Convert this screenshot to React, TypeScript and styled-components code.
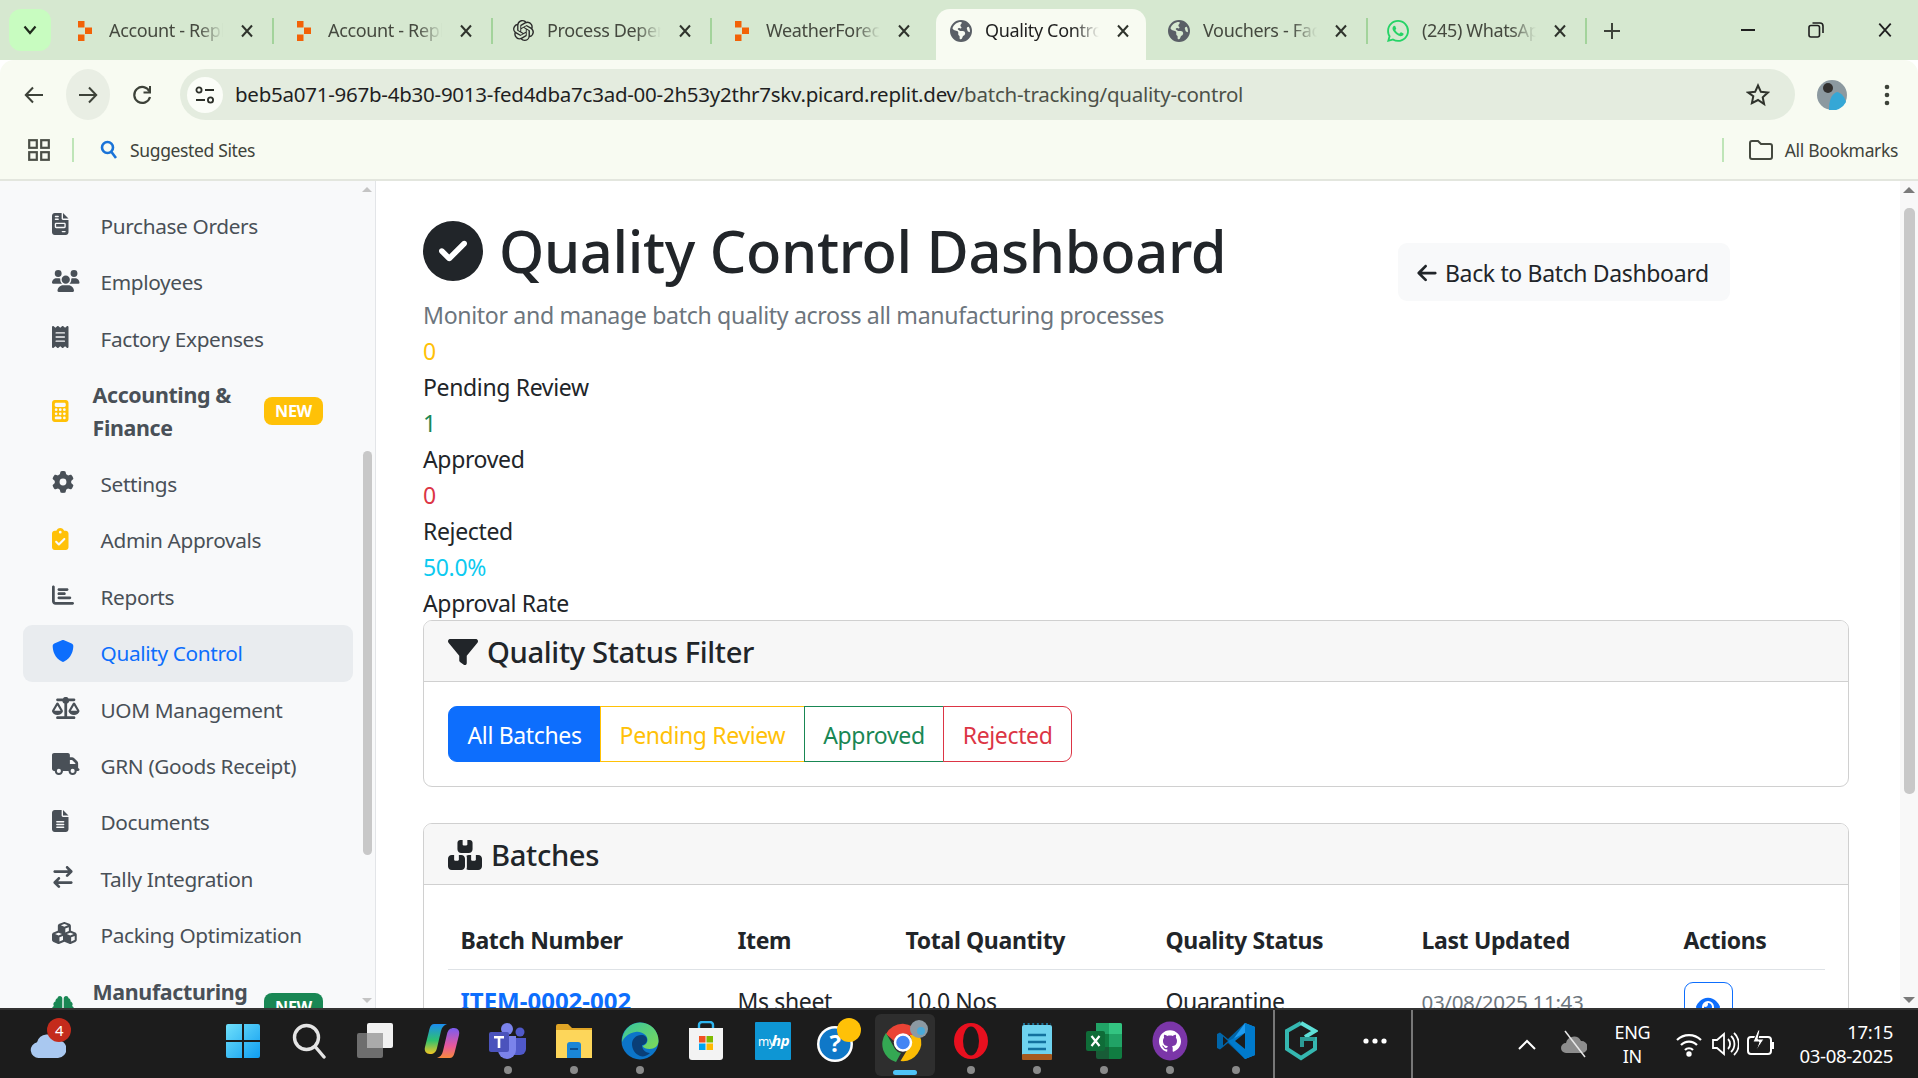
import React from 'react';
import styled, { createGlobalStyle } from 'styled-components';
import {
  FaArrowLeft, FaArrowRightArrowLeft, FaBoxesStacked, FaBrain, FaCalculator, FaChartBar, FaCircleCheck, FaClipboardCheck,
  FaCubes, FaEarthAmericas, FaEye, FaFileInvoice, FaFileLines, FaFilter, FaGear, FaReceipt, FaScaleBalanced, FaShield,
  FaTruck, FaUsers,
} from 'react-icons/fa6';
import { SiGithub, SiOpenai, SiWhatsapp } from 'react-icons/si';

const FONT = '"Noto Sans", "Open Sans", Arial, sans-serif';

const GlobalStyle = createGlobalStyle`
  html, body {
    margin: 0;
    padding: 0;
    height: 100%;
    overflow: hidden;
    background: #fff;
  }
  body {
    font-family: ${FONT};
    color: #212529;
    letter-spacing: -0.022em;
  }
  * { box-sizing: border-box; }
`;

const Screen = styled.div`
  width: 1918px;
  height: 1078px;
  display: flex;
  flex-direction: column;
  overflow: hidden;
`;

/* browser chrome */
const TabStrip = styled.div`
  height: 60px;
  flex: none;
  background: #d6e8d0;
  display: flex;
  align-items: flex-end;
  padding-left: 9px;
`;

const TabMenu = styled.div`
  width: 42px;
  height: 42px;
  margin-bottom: 9px;
  margin-right: 4px;
  border-radius: 12px;
  background: #c8fcc0;
  display: flex;
  align-items: center;
  justify-content: center;
`;

const Tab = styled.div<{ $active?: boolean; $sep?: boolean; $w: number; $pad: number }>`
  width: ${({ $w }) => $w}px;
  height: 51px;
  flex: none;
  display: flex;
  align-items: center;
  padding: 0 0 8px ${({ $pad }) => $pad}px;
  border-radius: 14px 14px 0 0;
  background: ${({ $active }) => ($active ? '#f8fbf2' : 'transparent')};
  position: relative;
  color: ${({ $active }) => ($active ? '#1f1f1f' : '#45493f')};

  &::after {
    content: '';
    display: ${({ $sep }) => ($sep ? 'block' : 'none')};
    position: absolute;
    right: 0;
    top: 9px;
    height: 26px;
    width: 2px;
    background: #a3d39b;
  }
`;

const Favicon = styled.div`
  width: 22px;
  height: 22px;
  flex: none;
  display: flex;
  align-items: center;
  justify-content: center;
`;

const TabTitle = styled.div`
  width: 114px;
  margin: -2px 0 0 13px;
  flex: none;
  font-size: 18px;
  white-space: nowrap;
  overflow: hidden;
  mask-image: linear-gradient(to right, #000 78%, transparent 100%);
`;

const TabClose = styled.div`
  margin-left: 17px;
  width: 14px;
  height: 14px;
  flex: none;
  display: flex;
`;

const NewTab = styled.div`
  width: 24px;
  height: 42px;
  margin-left: 13px;
  margin-bottom: 8px;
  display: flex;
  align-items: center;
  justify-content: center;
`;

const WindowControls = styled.div`
  margin-left: auto;
  height: 60px;
  display: flex;
  align-self: flex-start;
  align-items: center;
  gap: 53px;
  padding: 0 25px 0 0;
`;

const Toolbar = styled.div`
  height: 60px;
  flex: none;
  background: #f8fbf2;
  display: flex;
  align-items: center;
  padding: 9px 0 0 12px;
  border-radius: 14px 14px 0 0;
`;

const NavButton = styled.div<{ $on?: boolean }>`
  width: 44px;
  height: 51px;
  margin-right: 10px;
  border-radius: 50%;
  background: ${({ $on }) => ($on ? '#e9eee4' : 'transparent')};
  display: flex;
  align-items: center;
  justify-content: center;
  flex: none;
`;

const Omnibox = styled.div`
  width: 1615px;
  height: 51px;
  margin-left: 6px;
  border-radius: 26px;
  background: #e4ecdf;
  display: flex;
  align-items: center;
  flex: none;
  padding: 0 25px 0 7px;
`;

const TuneCircle = styled.div`
  width: 36px;
  height: 36px;
  border-radius: 50%;
  background: #fbfdf8;
  display: flex;
  align-items: center;
  justify-content: center;
  flex: none;
`;

const Url = styled.div`
  margin: -2px 0 0 12px;
  font-size: 20.5px;
  color: #1f1f1f;
  white-space: nowrap;
  letter-spacing: -0.012em;

  span {
    color: #4c5148;
  }
`;

const ToolEnd = styled.div`
  display: flex;
  align-items: center;
  flex: none;
  margin-left: 22px;
  gap: 37px;
`;

const BookmarkBar = styled.div`
  height: 61px;
  flex: none;
  background: #f8fbf2;
  border-bottom: 2px solid #e3e6de;
  display: flex;
  align-items: center;
  padding: 0 20px 0 28px;
  font-size: 17.5px;
  color: #3f433b;
`;

const VSep = styled.div<{ $m: string }>`
  width: 2px;
  height: 24px;
  background: #bfe5b8;
  margin: ${({ $m }) => $m};
  flex: none;
`;

const BarLabel = styled.span<{ $m: number }>`
  margin-left: ${({ $m }) => $m}px;
`;

const Push = styled.div`
  margin-left: auto;
`;

/* page */
const Page = styled.div`
  flex: 1;
  min-height: 0;
  display: flex;
  overflow: hidden;
  background: #fff;
`;

const Sidebar = styled.aside`
  width: 376px;
  flex: none;
  display: flex;
  background: #f8f9fa;
  border-right: 1px solid #e3e5e8;
  overflow: hidden;
`;

const SideList = styled.nav`
  width: 360px;
  flex: none;
  padding: 17px 7px 0 23px;
  font-size: 20.8px;
`;

const SideItem = styled.div<{ $active?: boolean; $group?: boolean }>`
  display: flex;
  align-items: center;
  min-height: 56.4px;
  padding: 12px 30px 12px 29px;
  border-radius: 9px;
  line-height: 32.4px;
  color: ${({ $active }) => ($active ? '#0d6efd' : '#495057')};
  background: ${({ $active }) => ($active ? '#e9ecef' : 'transparent')};
  font-weight: ${({ $group }) => ($group ? 700 : 400)};
  font-size: ${({ $group }) => ($group ? '21.4px' : '20.8px')};
`;

const SideIcon = styled.div<{ $group?: boolean; $color?: string; $iw: number }>`
  width: ${({ $group }) => ($group ? '40.5px' : '48.5px')};
  flex: none;
  display: flex;
  margin-top: ${({ $group }) => ($group ? '-2px' : '-4px')};
  color: ${({ $color }) => $color || 'inherit'};

  svg {
    height: 22px;
    width: ${({ $iw }) => $iw}px;
  }
`;

const SideLabel = styled.div<{ $group?: boolean }>`
  min-height: ${({ $group }) => ($group ? '64.8px' : '0')};
  width: ${({ $group }) => ($group ? '171px' : 'auto')};
  flex: none;
`;

const NewBadge = styled.div<{ $bg: string; $fg: string }>`
  margin: -2px 0 0 auto;
  width: 59px;
  height: 28px;
  border-radius: 8px;
  background: ${({ $bg }) => $bg};
  color: ${({ $fg }) => $fg};
  font-size: 16.2px;
  line-height: 28px;
  text-align: center;
  font-weight: 700;
  flex: none;
`;

const ScrollBar = styled.div<{ $w: number; $bg: string }>`
  width: ${({ $w }) => $w}px;
  flex: none;
  background: ${({ $bg }) => $bg};
  display: flex;
  flex-direction: column;
  align-items: center;
  height: 100%;
`;

const ScrollArrow = styled.div<{ $down?: boolean; $color: string; $size: number }>`
  width: 0;
  height: 0;
  flex: none;
  border-left: ${({ $size }) => $size}px solid transparent;
  border-right: ${({ $size }) => $size}px solid transparent;
  ${({ $down, $color, $size }) =>
    $down
      ? `border-top: ${$size}px solid ${$color};`
      : `border-bottom: ${$size}px solid ${$color};`}
  margin-top: ${({ $down }) => ($down ? 'auto' : '6px')};
  margin-bottom: ${({ $down }) => ($down ? '5px' : '0')};
`;

const ScrollThumb = styled.div<{ $top: number; $h: number; $w: number }>`
  width: ${({ $w }) => $w}px;
  height: ${({ $h }) => $h}px;
  margin-top: ${({ $top }) => $top}px;
  border-radius: 5px;
  background: #c8c8c8;
  flex: none;
`;

const MainWrap = styled.main`
  flex: 1;
  min-width: 0;
  display: flex;
`;

const Content = styled.div`
  flex: 1;
  min-width: 0;
  padding: 34px 51px 0 47px;
  font-size: 23px;
  line-height: 36px;
`;

const HeaderRow = styled.div`
  display: flex;
  justify-content: space-between;
  padding-right: 119px;
`;

const Title = styled.h1`
  margin: 0 0 10px;
  font-size: 57.8px;
  line-height: 72px;
  font-weight: 500;
  display: flex;
  align-items: center;
  gap: 16px;
  color: #212529;
`;

const Lead = styled.div`
  color: #6c757d;
  font-size: 23.15px;
`;

const BackButton = styled.div`
  margin-top: 28px;
  height: 58px;
  width: 332px;
  border-radius: 9px;
  background: #f8f9fa;
  display: flex;
  align-items: center;
  gap: 7px;
  padding: 2px 0 0 18px;
  color: #212529;
`;

const Stats = styled.div`
  margin-bottom: -1px;
`;

const StatValue = styled.div<{ $color: string }>`
  color: ${({ $color }) => $color};
`;

const Card = styled.section`
  border: 1px solid #d0d0d0;
  border-radius: 9px;
  margin-bottom: 36px;
  overflow: hidden;
  background: #fff;
`;

const CardHeader = styled.div`
  height: 61px;
  padding: 2px 24px 0;
  background: #f7f7f7;
  border-bottom: 1px solid #d0d0d0;
  display: flex;
  align-items: center;
  gap: 9px;
  font-size: 29.2px;
  font-weight: 500;
`;

const CardBody = styled.div`
  padding: 24px;
`;

const FilterGroup = styled.div`
  display: inline-flex;
`;

const FilterButton = styled.div<{ $color: string; $solid?: boolean }>`
  height: 56px;
  padding: 2px 18.5px 0;
  display: flex;
  align-items: center;
  border: 1.5px solid ${({ $color }) => $color};
  margin-left: -1px;
  background: ${({ $solid, $color }) => ($solid ? $color : '#fff')};
  color: ${({ $solid, $color }) => ($solid ? '#fff' : $color)};

  &:first-child {
    margin-left: 0;
    border-radius: 9px 0 0 9px;
  }
  &:last-child {
    border-radius: 0 9px 9px 0;
  }
`;

const Table = styled.table`
  width: 100%;
  border-collapse: collapse;
  table-layout: fixed;

  th {
    height: 60px;
    padding: 13px 12.5px 11px;
    font-weight: 700;
    text-align: left;
    border-bottom: 1.5px solid #dee2e6;
  }
  td {
    padding: 13px 12.5px 12px;
    vertical-align: top;
  }
`;

const BatchLink = styled.a`
  color: #0d6efd;
  font-weight: 700;
  font-size: 24px;
  letter-spacing: 0;
`;

const DateText = styled.small`
  font-size: 20.6px;
  color: #6c757d;
`;

const ViewButton = styled.div`
  width: 49px;
  height: 50px;
  margin-top: -1px;
  border: 1.5px solid #0d6efd;
  border-radius: 9px;
  color: #0d6efd;
  display: flex;
  align-items: center;
  justify-content: center;
  font-size: 24px;
`;

/* taskbar */
const Taskbar = styled.footer`
  height: 70px;
  flex: none;
  background: #1c1c1c;
  border-top: 2px solid #333;
  display: flex;
  align-items: center;
  color: #fff;
  font-family: ${FONT};
`;

const Weather = styled.div`
  width: 210px;
  flex: none;
  height: 100%;
  position: relative;
  padding: 22px 0 0 30px;
`;

const WeatherBadge = styled.div`
  position: absolute;
  left: 47px;
  top: 8px;
  width: 24px;
  height: 24px;
  border-radius: 50%;
  background: #c42b1c;
  font-size: 15px;
  line-height: 24px;
  text-align: center;
`;

const TaskSlot = styled.div<{ $active?: boolean; $ml?: number }>`
  width: 66.2px;
  height: 100%;
  flex: none;
  position: relative;
  margin-left: ${({ $ml }) => $ml || 0}px;
  display: flex;
  align-items: center;
  justify-content: center;
  padding-bottom: 6px;

  ${({ $active }) => ($active ? `
    &::before {
      content: '';
      position: absolute;
      left: 3px;
      right: 3px;
      top: 4px;
      bottom: 2px;
      background: #2e2e2e;
      border-radius: 6px;
    }
  ` : '')}

  & > svg {
    position: relative;
  }
`;

const RunDot = styled.div<{ $active?: boolean }>`
  position: absolute;
  left: 50%;
  bottom: ${({ $active }) => ($active ? '3px' : '4px')};
  width: ${({ $active }) => ($active ? '24px' : '8px')};
  height: ${({ $active }) => ($active ? '5px' : '8px')};
  margin-left: ${({ $active }) => ($active ? '-12px' : '-4px')};
  border-radius: 4px;
  background: ${({ $active }) => ($active ? '#4fc3f7' : '#8a8a8a')};
`;

const TaskDivider = styled.div<{ $ml: number }>`
  width: 2px;
  height: 100%;
  background: #777;
  flex: none;
  margin-left: ${({ $ml }) => $ml}px;
`;

const Tray = styled.div`
  flex: 1;
  display: flex;
  align-items: center;
  height: 100%;
`;

const TrayIcon = styled.div<{ $w: number; $ml: number }>`
  width: ${({ $w }) => $w}px;
  margin-left: ${({ $ml }) => $ml}px;
  flex: none;
  display: flex;
  justify-content: center;
`;

const LangBlock = styled.div`
  width: 60px;
  margin-left: 15px;
  font-size: 18px;
  line-height: 24px;
  text-align: center;
  flex: none;
`;

const ClockBlock = styled.div`
  margin-left: auto;
  padding-right: 25px;
  font-size: 18.6px;
  line-height: 24px;
  text-align: right;
`;

const ReplitIcon = () => (
  <svg width="16" height="22" viewBox="0 0 16 22" fill="#f26207">
    <path d="M1 1h6.5v6.5H1zM8 7.5h7V14H8zM1 14.5h6.5V21H1z" />
  </svg>
);

const Globe = ({ size = 22 }: { size?: number }) => <FaEarthAmericas size={size} color="#5a5f66" />;

const XMark = ({ size = 14, color = '#2f332c', weight = 2 }: { size?: number; color?: string; weight?: number }) => (
  <svg width={size} height={size} viewBox="0 0 14 14" stroke={color} strokeWidth={weight} fill="none">
    <path d="M2 1.5 12 12.5M12 1.5 2 12.5" />
  </svg>
);

const tabs = [
  { title: 'Account - Replit', icon: <ReplitIcon />, sep: true, w: 219, pad: 19 },
  { title: 'Account - Replit', icon: <ReplitIcon />, sep: true, w: 219, pad: 19 },
  { title: 'Process Dependencies', icon: <SiOpenai size={21} color="#2b2b2b" />, sep: true, w: 219, pad: 19 },
  { title: 'WeatherForecast', icon: <ReplitIcon />, sep: false, w: 224, pad: 19 },
  { title: 'Quality Control', icon: <Globe />, active: true, w: 210, pad: 14 },
  { title: 'Vouchers - Factory', icon: <Globe />, sep: true, w: 222, pad: 22 },
  { title: '(245) WhatsApp', icon: <SiWhatsapp size={22} color="#25d366" />, sep: true, w: 219, pad: 19 },
];

// iw: drawn width of the glyph at 22px height, from its font-awesome viewBox
const sideItems = [
  { label: 'Purchase Orders', icon: <FaFileInvoice />, iw: 16.5 },
  { label: 'Employees', icon: <FaUsers />, iw: 27.5 },
  { label: 'Factory Expenses', icon: <FaReceipt />, iw: 16.5 },
  { label: 'Accounting & Finance', icon: <FaCalculator />, iw: 16.5, group: true, color: '#ffc107', badge: ['#ffc107', '#fff'] },
  { label: 'Settings', icon: <FaGear />, iw: 22 },
  { label: 'Admin Approvals', icon: <FaClipboardCheck />, iw: 16.5, color: '#ffc107' },
  { label: 'Reports', icon: <FaChartBar />, iw: 22 },
  { label: 'Quality Control', icon: <FaShield />, iw: 22, active: true },
  { label: 'UOM Management', icon: <FaScaleBalanced />, iw: 27.5 },
  { label: 'GRN (Goods Receipt)', icon: <FaTruck />, iw: 27.5 },
  { label: 'Documents', icon: <FaFileLines />, iw: 16.5 },
  { label: 'Tally Integration', icon: <FaArrowRightArrowLeft />, iw: 22 },
  { label: 'Packing Optimization', icon: <FaCubes />, iw: 24.75 },
  { label: 'Manufacturing', icon: <FaBrain />, iw: 22, group: true, color: '#198754', badge: ['#198754', '#fff'] },
];

const stats = [
  { value: '0', label: 'Pending Review', color: '#ffc107' },
  { value: '1', label: 'Approved', color: '#198754' },
  { value: '0', label: 'Rejected', color: '#dc3545' },
  { value: '50.0%', label: 'Approval Rate', color: '#0dcaf0' },
];

const WinLogo = () => (
  <svg width="36" height="36" viewBox="0 0 36 36">
    <defs>
      <linearGradient id="win" x1="0" y1="0" x2="1" y2="1">
        <stop offset="0" stopColor="#6fe0fb" />
        <stop offset="1" stopColor="#0f9df0" />
      </linearGradient>
    </defs>
    <path fill="url(#win)" d="M1 3a2 2 0 0 1 2-2h14v16H1zM19 1h14a2 2 0 0 1 2 2v14H19zM1 19h16v16H3a2 2 0 0 1-2-2zM19 19h16v14a2 2 0 0 1-2 2H19z" />
  </svg>
);

const SearchGlyph = () => (
  <svg width="34" height="36" viewBox="0 0 34 36" fill="none" stroke="#e4e4e4" strokeWidth="3.4" strokeLinecap="round">
    <circle cx="14.5" cy="14.5" r="12" />
    <path d="M23.5 24 32 34" />
  </svg>
);

const TaskViewGlyph = () => (
  <svg width="36" height="36" viewBox="0 0 36 36">
    <rect x="10" y="0" width="26" height="25" rx="2" fill="#f1f1f1" />
    <rect x="0" y="10" width="26" height="25" rx="2" fill="#6e6e6e" />
    <rect x="10" y="10" width="16" height="15" fill="#aaa" />
  </svg>
);

const CopilotGlyph = () => (
  <svg width="36" height="36" viewBox="0 0 36 36">
    <defs>
      <linearGradient id="cop1" x1="0" y1="0" x2="0" y2="1">
        <stop offset="0" stopColor="#1b8cf0" />
        <stop offset="0.55" stopColor="#2fc26f" />
        <stop offset="1" stopColor="#f3c623" />
      </linearGradient>
      <linearGradient id="cop2" x1="0" y1="0" x2="0" y2="1">
        <stop offset="0" stopColor="#7b5cf0" />
        <stop offset="0.6" stopColor="#e8589c" />
        <stop offset="1" stopColor="#f78a3c" />
      </linearGradient>
    </defs>
    <path fill="url(#cop1)" d="M10 1h13c-3 1-5 3-6 7l-4 17c-1 4-3 6-7 6-4 0-6-3-5-7L5 8c1-4 2-7 5-7z" />
    <path fill="url(#cop2)" d="M26 35H13c3-1 5-3 6-7l4-17c1-4 3-6 7-6 4 0 6 3 5 7l-4 16c-1 4-2 7-5 7z" />
  </svg>
);

const TeamsGlyph = () => (
  <svg width="38" height="36" viewBox="0 0 38 36">
    <circle cx="18" cy="6" r="6" fill="#7b83eb" />
    <circle cx="31" cy="9" r="4.5" fill="#5059c9" />
    <path fill="#5059c9" d="M24 15h13v11a6 6 0 0 1-6 6h-7z" />
    <path fill="#7b83eb" d="M9 13h18v14a9 9 0 0 1-18 0z" />
    <rect x="0" y="9" width="20" height="20" rx="2" fill="#4b53bc" />
    <path fill="#fff" d="M5 13h10v2.5h-3.7V25H8.7v-9.5H5z" />
  </svg>
);

const FolderGlyph = () => (
  <svg width="38" height="36" viewBox="0 0 38 36">
    <path fill="#e0a526" d="M1 3a2 2 0 0 1 2-2h10l4 4h20v6H1z" />
    <path fill="#fdd65a" d="M1 7h36v28H1z" />
    <path fill="#1a86d6" d="M12 22a3 3 0 0 1 3-3h8a3 3 0 0 1 3 3v13H12z" />
    <rect x="15" y="25" width="8" height="2" fill="#0b4f8f" />
  </svg>
);

const EdgeGlyph = () => (
  <svg width="38" height="38" viewBox="0 0 38 38">
    <defs>
      <linearGradient id="edge1" x1="0" y1="0" x2="1" y2="1">
        <stop offset="0" stopColor="#36c5a0" />
        <stop offset="1" stopColor="#7ed957" />
      </linearGradient>
    </defs>
    <circle cx="19" cy="19" r="18.5" fill="#0c75c9" />
    <path fill="url(#edge1)" d="M19 .5C30 .5 37.5 9 37.5 19c0 5-4 8-9 8-3.5 0-6-1-7-3 3-1 5-3 5-6 0-5-6-9-12-8C8 11 3 15 1 20 1 9 9 .5 19 .5z" />
    <path fill="#0a3f78" d="M11 22c0-5 4-9 9-9 4 0 6 2 6 5s-3 5-5 5c0 4 3 8 8 8-3 3-7 4-10 3-5-2-8-7-8-12z" />
  </svg>
);

const StoreGlyph = () => (
  <svg width="36" height="40" viewBox="0 0 36 40">
    <path d="M11 8V4a3 3 0 0 1 3-3h8a3 3 0 0 1 3 3v4" fill="none" stroke="#2fb6f0" strokeWidth="2.4" />
    <path fill="#f3f3f3" d="M1 7h34v29a3 3 0 0 1-3 3H4a3 3 0 0 1-3-3z" />
    <rect x="11" y="15" width="6.5" height="6.5" fill="#f25022" />
    <rect x="18.5" y="15" width="6.5" height="6.5" fill="#7fba00" />
    <rect x="11" y="22.5" width="6.5" height="6.5" fill="#00a4ef" />
    <rect x="18.5" y="22.5" width="6.5" height="6.5" fill="#ffb900" />
  </svg>
);

const MyHpGlyph = () => (
  <svg width="36" height="38" viewBox="0 0 36 38">
    <rect width="36" height="38" rx="1" fill="#0e96d4" />
    <text x="3" y="24" fontSize="12" fill="#fff" fontFamily="Noto Sans, sans-serif">my</text>
    <text x="17" y="24" fontSize="15" fontStyle="italic" fontWeight="700" fill="#fff" fontFamily="Noto Sans, sans-serif">hp</text>
  </svg>
);

const HelpGlyph = () => (
  <svg width="46" height="46" viewBox="0 0 46 46">
    <circle cx="19" cy="26" r="18" fill="#fff" />
    <circle cx="19" cy="26" r="15.5" fill="#0f78c8" />
    <text x="19" y="34" fontSize="24" fontWeight="700" textAnchor="middle" fill="#fff" fontFamily="Noto Sans, sans-serif">?</text>
    <ellipse cx="33" cy="12" rx="12" ry="12" fill="#ffc107" />
  </svg>
);

const ChromeGlyph = () => (
  <svg width="46" height="46" viewBox="0 0 46 46">
    <path fill="#ea4335" d="M4 16a18.5 18.5 0 0 1 33.5 1H21a9 9 0 0 0-9 6z" />
    <path fill="#34a853" d="M4 16l9 16a9 9 0 0 0 6 4l-5 9A18.5 18.5 0 0 1 4 16z" transform="translate(0 -1)" />
    <path fill="#fbbc04" d="M37.5 17a18.5 18.5 0 0 1-19 26l9-15a9 9 0 0 0 0-11z" />
    <circle cx="21" cy="24.5" r="8" fill="#4285f4" stroke="#fff" strokeWidth="2.5" />
    <circle cx="37" cy="11" r="9" fill="#8c9aa3" />
    <circle cx="39" cy="13" r="4" fill="#4aa9d8" />
  </svg>
);

const OperaGlyph = () => (
  <svg width="36" height="38" viewBox="0 0 36 38">
    <ellipse cx="18" cy="19" rx="17" ry="18" fill="#e8101f" />
    <ellipse cx="18" cy="19" rx="8" ry="14.5" fill="#1c1c1c" />
  </svg>
);

const NotepadGlyph = () => (
  <svg width="32" height="38" viewBox="0 0 32 38">
    <rect x="1" y="3" width="30" height="33" rx="2" fill="#6ed3ef" />
    <rect x="1" y="32" width="30" height="6" rx="1" fill="#a65a1f" />
    <path stroke="#1e8fc0" strokeWidth="1.6" strokeDasharray="2 2.6" d="M2 2h28" />
    <path stroke="#12719e" strokeWidth="2.6" d="M7 13h18M7 20h18M7 27h18" />
  </svg>
);

const ExcelGlyph = () => (
  <svg width="36" height="38" viewBox="0 0 36 38">
    <path fill="#21a366" d="M10 1h24a2 2 0 0 1 2 2v9H10z" />
    <path fill="#33c481" d="M23 1h11a2 2 0 0 1 2 2v9H23z" />
    <path fill="#107c41" d="M10 12h13v13H10zM23 25h13v10a2 2 0 0 1-2 2H23z" />
    <path fill="#21a366" d="M23 12h13v13H23z" />
    <path fill="#185c37" d="M10 25h13v12H12a2 2 0 0 1-2-2z" />
    <rect x="0" y="9" width="19" height="20" rx="2" fill="#0f6c38" />
    <path stroke="#fff" strokeWidth="2.2" fill="none" d="M5.5 14 13.5 24M13.5 14 5.5 24" />
  </svg>
);

const GithubGlyph = () => (
  <svg width="36" height="40" viewBox="0 0 36 40">
    <ellipse cx="18" cy="20" rx="17.5" ry="19.5" fill="#7b36a8" />
    <g transform="translate(7 9)">
      <SiGithub size={22} color="#fff" />
    </g>
  </svg>
);

const VsCodeGlyph = () => (
  <svg width="40" height="38" viewBox="0 0 40 38">
    <path fill="#0065a9" d="M29 1 12 17 4 10.5 1 12v14l3 1.5L12 21l17 16z" />
    <path fill="#1f9cf0" d="M29 1 39 5v28l-10 4V11L16 19z" />
    <path fill="#007acc" d="M29 37 39 33V5L29 1v10l-17 8 17 18z" />
    <path fill="#1c1c1c" d="M7 14.5V23.5L12 19zM29 11v16l-10-8z" />
  </svg>
);

const CubeGlyph = () => (
  <svg width="34" height="40" viewBox="0 0 34 40" fill="none" stroke="#35b7b0" strokeWidth="4">
    <path d="M17 2 3 10v18l14 9 14-9V16" />
    <path d="M17 2l14 8-10 6" stroke="#5fe0d8" />
    <path d="M31 18H18v8" stroke="#2c9c96" />
  </svg>
);

const WifiGlyph = () => (
  <svg width="28" height="26" viewBox="0 0 28 26" fill="none" stroke="#fff" strokeWidth="2.2">
    <path d="M2 9a17 17 0 0 1 24 0M6 14a11 11 0 0 1 16 0M10 19a5.5 5.5 0 0 1 8 0" />
    <circle cx="14" cy="23" r="1.6" fill="#fff" />
  </svg>
);

const SoundGlyph = () => (
  <svg width="28" height="26" viewBox="0 0 28 26" fill="none" stroke="#fff" strokeWidth="1.8">
    <path d="M2 9h4l7-6v20l-7-6H2z" />
    <path d="M17 8a7 7 0 0 1 0 10M20 5a11 11 0 0 1 0 16M23 2a15 15 0 0 1 0 22" />
  </svg>
);

const BatteryGlyph = () => (
  <svg width="30" height="30" viewBox="0 0 30 30" fill="none" stroke="#fff" strokeWidth="2">
    <rect x="2" y="8" width="23" height="17" rx="3" />
    <path d="M27 13v7" />
    <path d="M12 1 7 13h6l-3 9 8-12h-6l2-9z" fill="#fff" stroke="#1c1c1c" strokeWidth="1" />
  </svg>
);

const taskIcons = [
  { glyph: <WinLogo /> },
  { glyph: <SearchGlyph /> },
  { glyph: <TaskViewGlyph /> },
  { glyph: <CopilotGlyph /> },
  { glyph: <TeamsGlyph />, dot: true },
  { glyph: <FolderGlyph />, dot: true },
  { glyph: <EdgeGlyph />, dot: true },
  { glyph: <StoreGlyph /> },
  { glyph: <MyHpGlyph /> },
  { glyph: <HelpGlyph /> },
  { glyph: <ChromeGlyph />, active: true },
  { glyph: <OperaGlyph />, dot: true },
  { glyph: <NotepadGlyph />, dot: true },
  { glyph: <ExcelGlyph />, dot: true },
  { glyph: <GithubGlyph />, dot: true },
  { glyph: <VsCodeGlyph />, dot: true },
];

const App: React.FC = () => (
  <Screen>
    <GlobalStyle />
    <TabStrip>
      <TabMenu>
        <svg width="14" height="10" viewBox="0 0 14 10" fill="none" stroke="#1f2a1c" strokeWidth="2.2">
          <path d="M1.5 1.5 7 8l5.5-6.5" />
        </svg>
      </TabMenu>
      {tabs.map((tab, i) => (
        <Tab key={i} $active={tab.active} $sep={tab.sep} $w={tab.w} $pad={tab.pad}>
          <Favicon>{tab.icon}</Favicon>
          <TabTitle>{tab.title}</TabTitle>
          <TabClose><XMark /></TabClose>
        </Tab>
      ))}
      <NewTab>
        <svg width="16" height="16" viewBox="0 0 16 16" stroke="#3d4239" strokeWidth="2">
          <path d="M8 0v16M0 8h16" />
        </svg>
      </NewTab>
      <WindowControls>
        <svg width="14" height="2" viewBox="0 0 14 2"><rect width="14" height="2" fill="#1f1f1f" /></svg>
        <svg width="16" height="16" viewBox="0 0 16 16" fill="none" stroke="#1f1f1f" strokeWidth="1.6">
          <rect x="1" y="3.5" width="10.5" height="11.5" rx="2" />
          <path d="M4.5 1h7.5a3 3 0 0 1 3 3v7" />
        </svg>
        <XMark size={16} color="#1f1f1f" weight={1.6} />
      </WindowControls>
    </TabStrip>

    <Toolbar>
      <NavButton>
        <svg width="20" height="20" viewBox="0 0 20 20" fill="none" stroke="#3d4239" strokeWidth="2">
          <path d="M19 10H2M9 2.5 1.8 10 9 17.5" />
        </svg>
      </NavButton>
      <NavButton $on>
        <svg width="20" height="20" viewBox="0 0 20 20" fill="none" stroke="#3d4239" strokeWidth="2">
          <path d="M1 10h17M11 2.5l7.2 7.5-7.2 7.5" />
        </svg>
      </NavButton>
      <NavButton>
        <svg width="20" height="22" viewBox="0 0 20 22" fill="none" stroke="#3d4239" strokeWidth="2.2">
          <path d="M17.5 7.5A8 8 0 1 0 18 13" />
          <path d="M18 2v6.5h-6.5" strokeWidth="2" />
        </svg>
      </NavButton>
      <Omnibox>
        <TuneCircle>
          <svg width="20" height="18" viewBox="0 0 20 18" fill="none" stroke="#2c2f29" strokeWidth="1.8">
            <circle cx="4" cy="4" r="2.6" />
            <path d="M10 4h9M1 14h9" />
            <circle cx="15.5" cy="14" r="2.6" />
          </svg>
        </TuneCircle>
        <Url>beb5a071-967b-4b30-9013-fed4dba7c3ad-00-2h53y2thr7skv.picard.replit.dev<span>/batch-tracking/quality-control</span></Url>
        <Push />
        <svg width="24" height="24" viewBox="0 0 24 24" fill="none" stroke="#2f332c" strokeWidth="2">
          <path d="m12 2.5 2.9 6.3 6.9.8-5.1 4.7 1.4 6.8L12 17l-6.1 3.1 1.4-6.8L2.2 9.6l6.9-.8z" />
        </svg>
      </Omnibox>
      <ToolEnd>
        <svg width="30" height="30" viewBox="0 0 30 30">
          <circle cx="15" cy="15" r="15" fill="#8c99a0" />
          <path d="M12 30c0-9 2-16 8-18 5 1 8 6 9 10a15 15 0 0 1-17 8z" fill="#35a7d6" />
          <circle cx="11" cy="8" r="5" fill="#32302e" />
        </svg>
        <svg width="6" height="22" viewBox="0 0 6 22" fill="#3d4239">
          <circle cx="3" cy="3" r="2.3" />
          <circle cx="3" cy="11" r="2.3" />
          <circle cx="3" cy="19" r="2.3" />
        </svg>
      </ToolEnd>
    </Toolbar>

    <BookmarkBar>
      <svg width="22" height="22" viewBox="0 0 22 22" fill="none" stroke="#4b4f47" strokeWidth="2.2">
        <rect x="1.2" y="1.2" width="7.6" height="7.6" />
        <rect x="13.2" y="1.2" width="7.6" height="7.6" />
        <rect x="1.2" y="13.2" width="7.6" height="7.6" />
        <rect x="13.2" y="13.2" width="7.6" height="7.6" />
      </svg>
      <VSep $m="0 26px 0 22px" />
      <svg width="17" height="19" viewBox="0 0 17 19" fill="none" stroke="#1a73d8" strokeWidth="2.6">
        <circle cx="7.5" cy="7.5" r="5.5" />
        <path d="m11.5 12 4.5 6" />
      </svg>
      <BarLabel $m={13}>Suggested Sites</BarLabel>
      <Push />
      <VSep $m="0 25px 0 0" />
      <svg width="24" height="20" viewBox="0 0 24 20" fill="none" stroke="#45493f" strokeWidth="2">
        <path d="M1 3a2 2 0 0 1 2-2h6l3 3h9a2 2 0 0 1 2 2v11a2 2 0 0 1-2 2H3a2 2 0 0 1-2-2z" />
      </svg>
      <BarLabel $m={12}>All Bookmarks</BarLabel>
    </BookmarkBar>

    <Page>
      <Sidebar>
        <SideList>
          {sideItems.map((item) => (
            <SideItem key={item.label} $active={item.active} $group={item.group}>
              <SideIcon $group={item.group} $color={item.color} $iw={item.iw}>{item.icon}</SideIcon>
              <SideLabel $group={item.group}>{item.label}</SideLabel>
              {item.badge && <NewBadge $bg={item.badge[0]} $fg={item.badge[1]}>NEW</NewBadge>}
            </SideItem>
          ))}
        </SideList>
        <ScrollBar $w={14} $bg="transparent">
          <ScrollArrow $color="#c4c4c4" $size={5} />
          <ScrollThumb $top={259} $h={404} $w={9} />
          <ScrollArrow $down $color="#c4c4c4" $size={5} />
        </ScrollBar>
      </Sidebar>

      <MainWrap>
        <Content>
          <HeaderRow>
            <div>
              <Title>
                <FaCircleCheck size={60} />
                Quality Control Dashboard
              </Title>
              <Lead>Monitor and manage batch quality across all manufacturing processes</Lead>
            </div>
            <BackButton>
              <FaArrowLeft size={22} />
              Back to Batch Dashboard
            </BackButton>
          </HeaderRow>

          <Stats>
            {stats.map((stat) => (
              <div key={stat.label}>
                <StatValue $color={stat.color}>{stat.value}</StatValue>
                <div>{stat.label}</div>
              </div>
            ))}
          </Stats>

          <Card>
            <CardHeader>
              <FaFilter size={30} />
              Quality Status Filter
            </CardHeader>
            <CardBody>
              <FilterGroup>
                <FilterButton $color="#0d6efd" $solid>All Batches</FilterButton>
                <FilterButton $color="#ffc107">Pending Review</FilterButton>
                <FilterButton $color="#198754">Approved</FilterButton>
                <FilterButton $color="#dc3545">Rejected</FilterButton>
              </FilterGroup>
            </CardBody>
          </Card>

          <Card>
            <CardHeader>
              <FaBoxesStacked size={34} />
              Batches
            </CardHeader>
            <CardBody>
              <Table>
                <colgroup>
                  <col width="277" />
                  <col width="168" />
                  <col width="260" />
                  <col width="256" />
                  <col width="262" />
                  <col width="154" />
                </colgroup>
                <thead>
                  <tr>
                    <th>Batch Number</th>
                    <th>Item</th>
                    <th>Total Quantity</th>
                    <th>Quality Status</th>
                    <th>Last Updated</th>
                    <th>Actions</th>
                  </tr>
                </thead>
                <tbody>
                  <tr>
                    <td><BatchLink>ITEM-0002-002</BatchLink></td>
                    <td>Ms sheet</td>
                    <td>10.0 Nos</td>
                    <td>Quarantine</td>
                    <td><DateText>03/08/2025 11:43</DateText></td>
                    <td><ViewButton><FaEye /></ViewButton></td>
                  </tr>
                </tbody>
              </Table>
            </CardBody>
          </Card>
        </Content>
        <ScrollBar $w={18} $bg="#f8f8f8">
          <ScrollArrow $color="#7a7a7a" $size={6} />
          <ScrollThumb $top={15} $h={586} $w={11} />
          <ScrollArrow $down $color="#7a7a7a" $size={6} />
        </ScrollBar>
      </MainWrap>
    </Page>

    <Taskbar>
      <Weather>
        <svg width="36" height="26" viewBox="0 0 36 26">
          <path fill="#a9c8f0" d="M9 26a8 8 0 0 1-2-15.8A11 11 0 0 1 27 8a9 9 0 0 1 1 18z" />
        </svg>
        <WeatherBadge>4</WeatherBadge>
      </Weather>
      {taskIcons.map((icon, i) => (
        <TaskSlot key={i} $active={icon.active}>
          {icon.glyph}
          {(icon.dot || icon.active) && <RunDot $active={icon.active} />}
        </TaskSlot>
      ))}
      <TaskDivider $ml={4} />
      <TaskSlot $ml={-7}><CubeGlyph /></TaskSlot>
      <TaskSlot $ml={8}>
        <svg width="24" height="6" viewBox="0 0 24 6" fill="#fff">
          <circle cx="3" cy="3" r="2.6" />
          <circle cx="12" cy="3" r="2.6" />
          <circle cx="21" cy="3" r="2.6" />
        </svg>
      </TaskSlot>
      <TaskDivider $ml={3} />
      <Tray>
        <TrayIcon $w={18} $ml={105}>
          <svg width="18" height="11" viewBox="0 0 18 11" fill="none" stroke="#fff" strokeWidth="2">
            <path d="M1 10 9 2l8 8" />
          </svg>
        </TrayIcon>
        <TrayIcon $w={26} $ml={25}>
          <svg width="26" height="30" viewBox="0 0 26 30">
            <path fill="#8d8d8d" d="M5 24a5 5 0 0 1 0-10 8 8 0 0 1 15-2 6 6 0 0 1 1 12z" />
            <path stroke="#e8e8e8" strokeWidth="1.5" d="M4 2l20 26" />
          </svg>
        </TrayIcon>
        <LangBlock>ENG<br />IN</LangBlock>
        <TrayIcon $w={28} $ml={13}><WifiGlyph /></TrayIcon>
        <TrayIcon $w={28} $ml={8}><SoundGlyph /></TrayIcon>
        <TrayIcon $w={30} $ml={7}><BatteryGlyph /></TrayIcon>
        <ClockBlock>17:15<br />03-08-2025</ClockBlock>
      </Tray>
    </Taskbar>
  </Screen>
);

export default App;
